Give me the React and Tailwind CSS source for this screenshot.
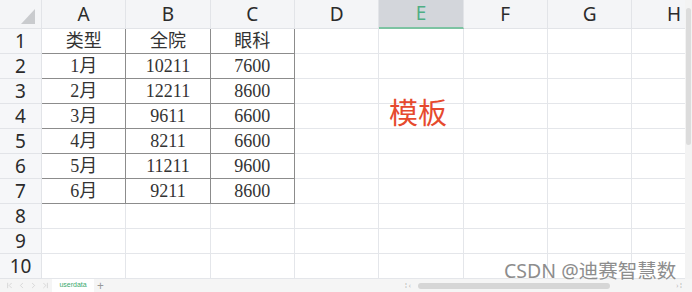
import { ChevronFirst, ChevronLeft, ChevronRight, ChevronLast } from 'lucide-react'

const cols = ['A', 'B', 'C', 'D', 'E', 'F', 'G', 'H']
const data = [
  ['类型', '全院', '眼科'],
  ['1月', '10211', '7600'],
  ['2月', '12211', '8600'],
  ['3月', '9611', '6600'],
  ['4月', '8211', '6600'],
  ['5月', '11211', '9600'],
  ['6月', '9211', '8600'],
]
const rows = [1, 2, 3, 4, 5, 6, 7, 8, 9, 10]

const gridCols = 'grid grid-cols-[42px_repeat(8,84.33px)]'

export default function App() {
  return (
    <div className="relative w-[692px] h-[292px] overflow-hidden bg-white font-['Noto_Sans','Noto_Sans_CJK_SC',sans-serif] text-[#2b2b2b]">
      <div className="flex h-[279px]">
        <div className="w-[685px] overflow-hidden">
          {/* column headers */}
          <div className={`${gridCols} h-[29px] w-max bg-[#f4f5f7]`}>
            <div className="flex items-end justify-end pr-[6px] pb-[4px] border-r border-b border-[#e2e4e8]">
              <svg width="14" height="15" viewBox="0 0 14 15">
                <polygon points="14,0 14,15 0,15" fill="#c9cbce" />
              </svg>
            </div>
            {cols.map((c) => (
              <div
                key={c}
                className={
                  c === 'E'
                    ? 'flex items-center justify-center text-[19px] leading-none bg-[#d3d6db] text-[#4fae84] border-r border-[#e2e4e8] border-b-2 border-b-[#7cc3a2]'
                    : 'flex items-center justify-center text-[19px] leading-none border-r border-b border-[#e2e4e8]'
                }
              >
                {c}
              </div>
            ))}
          </div>

          {rows.map((r) => (
            <div key={r} className={`${gridCols} h-[25px] w-max`}>
              <div className="flex items-center justify-center text-[19px] leading-none bg-[#f6f7f9] border-r border-b border-[#e2e4e8]">
                {r}
              </div>
              {cols.map((c, ci) => {
                const val = r <= 7 && ci < 3 ? data[r - 1][ci] : ''
                const inTable = r <= 7 && ci < 3
                return (
                  <div
                    key={c}
                    className={
                      inTable
                        ? "flex items-center justify-center leading-none border-r border-b border-[#8c8c8c] font-['Liberation_Serif','Noto_Sans_CJK_SC',serif] text-[18px] text-[#333]"
                        : 'border-r border-b border-[#e4e6ea]'
                    }
                  >
                    {val}
                  </div>
                )
              })}
            </div>
          ))}
        </div>

        {/* vertical scrollbar */}
        <div className="w-[7px] bg-[#f3f3f3] flex flex-col items-center pt-[8px]">
          <div className="w-[5px] h-[137px] rounded-full bg-[#dcdcdc]" />
        </div>
      </div>

      {/* sheet tab bar */}
      <div className="flex items-center h-[13px] bg-[#f5f5f5] text-[#c2c2c2]">
        <div className="flex items-center gap-[3px] pl-[5px] w-[52px]">
          <ChevronFirst size={9} strokeWidth={1.5} />
          <ChevronLeft size={9} strokeWidth={1.5} />
          <ChevronRight size={9} strokeWidth={1.5} />
          <ChevronLast size={9} strokeWidth={1.5} />
        </div>
        <div className="h-full w-[42px] bg-white flex items-center justify-center text-[7px] text-[#3aaa6e] font-['Liberation_Sans',sans-serif]">
          userdata
        </div>
        <div className="ml-[3px] text-[12px] leading-none text-[#999]">+</div>
        <div className="ml-auto mr-[7px] w-[280px] h-full flex items-center">
          <div className="text-[7px] text-[#bbb] leading-none w-[13px]">⁞ ‹</div>
          <div className="w-[192px] h-[6px] rounded-full bg-[#d6d6d6]" />
          <div className="ml-auto text-[7px] text-[#bbb] leading-none pr-[3px]">› ⁞</div>
        </div>
      </div>

      {/* text box in E */}
      <div className="absolute left-[389px] top-[97px] text-[29px] leading-none text-[#e64a2e] font-['Noto_Sans_CJK_SC',sans-serif]">
        模板
      </div>

      {/* watermark */}
      <div className="absolute left-[504px] top-[261px] text-[19.5px] leading-none text-[#8d8d8d] font-['Noto_Sans','Noto_Sans_CJK_SC',sans-serif] [text-shadow:0_0_2px_#ffffff]">
        CSDN @迪赛智慧数
      </div>
    </div>
  )
}
